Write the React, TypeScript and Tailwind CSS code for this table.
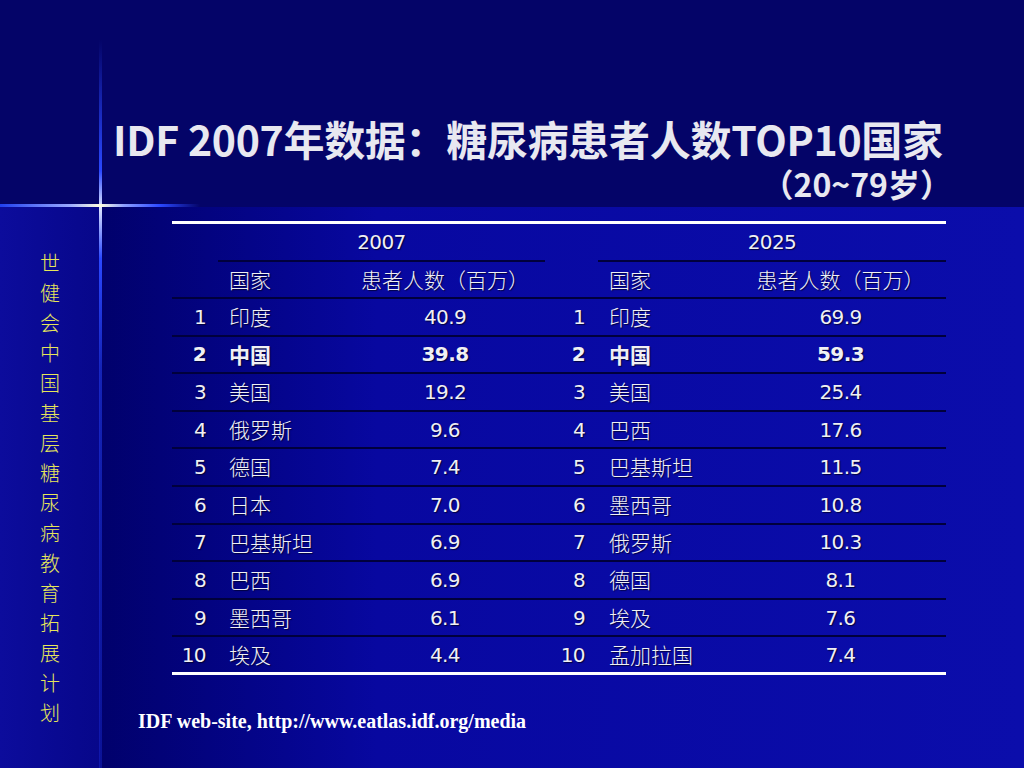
import React from 'react';

type Row = { rank: number; country: string; value: string };

const left: Row[] = [
  { rank: 1, country: '印度', value: '40.9' },
  { rank: 2, country: '中国', value: '39.8' },
  { rank: 3, country: '美国', value: '19.2' },
  { rank: 4, country: '俄罗斯', value: '9.6' },
  { rank: 5, country: '德国', value: '7.4' },
  { rank: 6, country: '日本', value: '7.0' },
  { rank: 7, country: '巴基斯坦', value: '6.9' },
  { rank: 8, country: '巴西', value: '6.9' },
  { rank: 9, country: '墨西哥', value: '6.1' },
  { rank: 10, country: '埃及', value: '4.4' },
];

const right: Row[] = [
  { rank: 1, country: '印度', value: '69.9' },
  { rank: 2, country: '中国', value: '59.3' },
  { rank: 3, country: '美国', value: '25.4' },
  { rank: 4, country: '巴西', value: '17.6' },
  { rank: 5, country: '巴基斯坦', value: '11.5' },
  { rank: 6, country: '墨西哥', value: '10.8' },
  { rank: 7, country: '俄罗斯', value: '10.3' },
  { rank: 8, country: '德国', value: '8.1' },
  { rank: 9, country: '埃及', value: '7.6' },
  { rank: 10, country: '孟加拉国', value: '7.4' },
];

const sideText = '世健会中国基层糖尿病教育拓展计划'.split('');

const num = "font-['DejaVu_Sans','Noto_Sans_CJK_SC',sans-serif] text-[20px] tracking-[-0.6px]";
const cjk = "font-['Noto_Sans_CJK_SC',sans-serif] text-[21px] font-light";

export default function App() {
  return (
    <div className="relative w-[1024px] h-[768px] overflow-hidden bg-[#040468] text-[#f0f0f4] font-['Noto_Sans_CJK_SC',sans-serif]">
      {/* 标题区 */}
      <header className="h-[207px] flex flex-col pt-[116px] pr-[72px]">
        <h1 className="pl-[113px] text-[41px] leading-[44px] font-bold text-[#e8e8f0] tracking-[-0.3px] whitespace-nowrap">
          IDF 2007年数据：糖尿病患者人数TOP10国家
        </h1>
        <div className="mt-[6px] flex justify-end text-[32px] leading-[34px] font-bold text-[#e8e8f0] whitespace-nowrap">
          （20~79岁）
        </div>
      </header>

      <div className="flex h-[561px]">
        {/* 左侧竖排文字 */}
        <aside className="w-[100px] bg-gradient-to-r from-[#0c0c9c] to-[#07078a] flex flex-col items-center pt-[41px]">
          {sideText.map((c, i) => (
            <span key={i} className="text-[20px] leading-[30px] text-[#e6e65a] font-light">
              {c}
            </span>
          ))}
        </aside>

        {/* 主体 */}
        <main className="flex-1 flex flex-col bg-gradient-to-r from-[#01016c] via-[#0808a0] via-30% to-[#0b0dab] pt-[14px]">
          <div className="ml-[72px] w-[774px] border-t-[3px] border-white [text-shadow:1px_1px_1px_rgba(0,0,40,0.8)]">
            <div className="flex h-[38px]">
              <div className="w-[46px]" />
              <div className={`w-[327px] flex items-center justify-center border-b-2 border-[#00003c] ${num}`}>2007</div>
              <div className="w-[53px]" />
              <div className={`w-[348px] flex items-center justify-center border-b-2 border-[#00003c] ${num}`}>2025</div>
            </div>
            <div className="flex h-[37px] border-b-2 border-[#00003c] items-center">
              <div className="w-[46px]" />
              <div className={`w-[127px] pl-[11px] ${cjk}`}>国家</div>
              <div className={`w-[200px] text-center ${cjk}`}>患者人数（百万）</div>
              <div className="w-[53px]" />
              <div className={`w-[137px] pl-[11px] ${cjk}`}>国家</div>
              <div className={`w-[211px] text-center ${cjk}`}>患者人数（百万）</div>
            </div>
            {left.map((l, i) => {
              const r = right[i];
              const last = i === left.length - 1;
              const bold = l.rank === 2 ? 'font-bold' : '';
              return (
                <div
                  key={i}
                  className={`flex h-[37.6px] items-center ${last ? 'border-b-[3px] border-white' : 'border-b-2 border-[#00003c]'}`}
                >
                  <div className={`w-[46px] pr-[12px] text-right ${num} ${bold}`}>{l.rank}</div>
                  <div className={`w-[127px] pl-[11px] ${cjk} ${l.rank === 2 ? '!font-bold' : ''}`}>{l.country}</div>
                  <div className={`w-[200px] text-center ${num} ${bold}`}>{l.value}</div>
                  <div className={`w-[53px] pr-[13px] text-right ${num} ${bold}`}>{r.rank}</div>
                  <div className={`w-[137px] pl-[11px] ${cjk} ${r.rank === 2 ? '!font-bold' : ''}`}>{r.country}</div>
                  <div className={`w-[211px] text-center ${num} ${bold}`}>{r.value}</div>
                </div>
              );
            })}
          </div>

          <p className="ml-[38px] mt-[34px] font-['Liberation_Serif',serif] font-bold text-[20px] leading-[24px] text-white">
            IDF web-site, http://www.eatlas.idf.org/media
          </p>
        </main>
      </div>

      {/* 十字光线 */}
      <div className="absolute left-[99px] top-[40px] w-[3px] h-[728px] bg-[linear-gradient(to_bottom,transparent,#2a48ff_18%,#dfe6ff_23%,#2a48ff_30%,rgba(40,70,255,0.5)_45%,rgba(30,50,230,0.35)_100%)]" />
      <div className="absolute left-0 top-[204px] w-[200px] h-[3px] bg-[linear-gradient(to_right,#2040f0,#9aaaff_35%,#ffffe0_50%,#8ea0ff_62%,#2a48ff_80%,transparent)]" />
    </div>
  );
}
